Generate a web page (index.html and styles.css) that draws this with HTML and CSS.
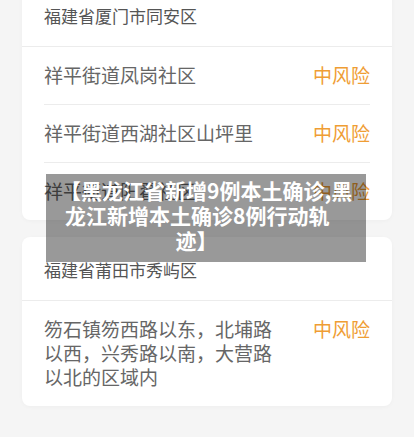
FILE: index.html
```html
<!DOCTYPE html>
<html lang="zh-CN">
<head>
<meta charset="utf-8">
<title>中风险地区</title>
<link rel="stylesheet" href="styles.css">
</head>
<body>
<div class="page">
  <div class="list">
    <section class="card">
      <div class="card-head">福建省厦门市同安区</div>
      <div class="rows">
        <div class="row"><span class="name">祥平街道凤岗社区</span><span class="risk">中风险</span></div>
        <div class="row"><span class="name">祥平街道西湖社区山坪里</span><span class="risk">中风险</span></div>
        <div class="row"><span class="name">祥平街道阳翟社区</span><span class="risk">中风险</span></div>
      </div>
    </section>
    <section class="card">
      <div class="card-head">福建省莆田市秀屿区</div>
      <div class="rows">
        <div class="row"><span class="name">笏石镇笏西路以东，北埔路以西，兴秀路以南，大营路以北的区域内</span><span class="risk">中风险</span></div>
      </div>
    </section>
  </div>
  <div class="overlay">
    <div class="ov-text">
      <span class="ov-line ov-first">【黑龙江省新增9例本土确诊,黑</span>
      <span class="ov-line">龙江新增本土确诊8例行动轨</span>
      <span class="ov-line">迹】</span>
    </div>
  </div>
</div>
</body>
</html>
```
FILE: styles.css
```css
html, body {
  margin: 0;
  padding: 0;
  background: #f5f5f5;
  height: 100%;
  overflow: hidden;
}
body {
  font-family: "Noto Sans CJK SC", "Noto Sans", sans-serif;
}
.page {
  position: relative;
  display: flow-root;
  width: 414px;
  height: 437px;
}
.list {
  display: flex;
  flex-direction: column;
  gap: 17px;
  padding: 0 22px;
  margin-top: -17px;
}
.card {
  background: #fff;
  border-radius: 8px;
  box-shadow: 0 1px 4px rgba(0, 0, 0, 0.03);
}
.card-head {
  padding: 21px 22px 18px;
  font-size: 17px;
  line-height: 24px;
  color: #555;
  border-bottom: 1px solid #ececec;
}
.rows {
  padding: 0 22px;
}
.row {
  display: flex;
  align-items: flex-start;
  justify-content: space-between;
  padding: 16px 0 17px;
  font-size: 19px;
  line-height: 24px;
}
.row + .row {
  border-top: 1px solid #ececec;
}
.name {
  color: #666;
  max-width: 236px;
}
.risk {
  color: #ef9d34;
  flex-shrink: 0;
}
.overlay {
  position: absolute;
  left: 46px;
  top: 174px;
  width: 320px;
  height: 88px;
  background: rgba(0, 0, 0, 0.4);
  box-sizing: border-box;
  padding: 4px 38px 0 19px;
}
.ov-text {
  display: flex;
  flex-direction: column;
  color: #fff;
  font-weight: 700;
  font-size: 21px;
  line-height: 25px;
  text-align: center;
}
.ov-line {
  display: block;
  white-space: nowrap;
}
.ov-first {
  margin-left: -5px;
}
```
